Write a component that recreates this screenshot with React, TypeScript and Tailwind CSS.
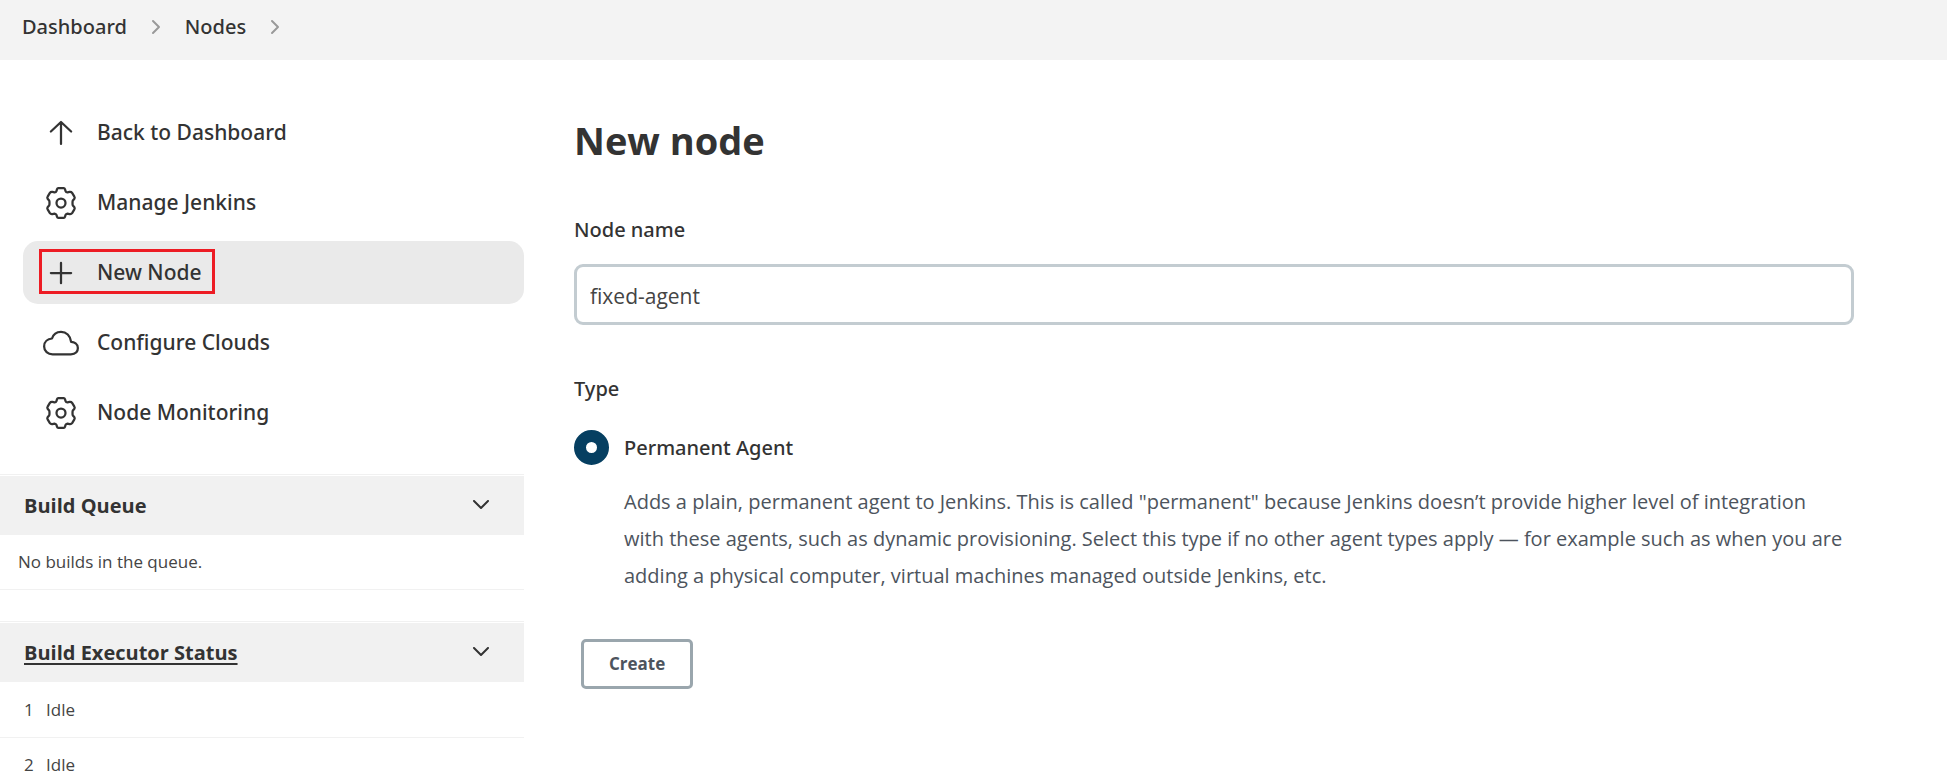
import { useState, type ReactNode } from "react";

type IconProps = { className?: string };

function Icon({ className, children }: IconProps & { children: ReactNode }) {
  return (
    <svg
      viewBox="0 0 512 512"
      className={className}
      fill="none"
      stroke="currentColor"
      strokeWidth={32}
      strokeLinecap="round"
      strokeLinejoin="round"
      aria-hidden="true"
    >
      {children}
    </svg>
  );
}

function ArrowUpIcon({ className }: IconProps) {
  return (
    <Icon className={className}>
      <path d="M112 234l144-134 144 134M256 104v308" />
    </Icon>
  );
}

// Six broad lobes with shallow notches between them, around a small hub.
function GearIcon({ className }: IconProps) {
  return (
    <Icon className={className}>
      <circle cx="256" cy="256" r="64" />
      <path d="M217 46H295Q308 46 312 58L321 86Q327 104 348 106L378 99Q402 95 414 112L446 166Q456 182 446 196L432 212Q420 224 420 238V274Q420 288 432 300L446 316Q456 330 446 346L414 400Q402 417 378 413L348 406Q327 408 321 426L312 454Q308 466 295 466H217Q204 466 200 454L191 426Q185 408 164 406L134 413Q110 417 98 400L66 346Q56 330 66 316L80 300Q92 288 92 274V238Q92 224 80 212L66 196Q56 182 66 166L98 112Q110 95 134 99L164 106Q185 104 191 86L200 58Q204 46 217 46Z" />
    </Icon>
  );
}

function PlusIcon({ className }: IconProps) {
  return (
    <Icon className={className}>
      <path d="M256 112v288M400 256H112" />
    </Icon>
  );
}

function CloudIcon({ className }: IconProps) {
  return (
    <Icon className={className}>
      <path d="M400 240c-8.89-89.54-71-144-144-144-69 0-113.44 48.2-128 96-60 6-112 43.59-112 112 0 66 54 112 120 112h260c55 0 100-27.44 100-88 0-59.82-53-85.76-96-88z" />
    </Icon>
  );
}

function ChevronRight() {
  return (
    <svg viewBox="0 0 10 16" className="h-4 w-[10px] text-[#999]" fill="none" stroke="currentColor" strokeWidth={2} strokeLinecap="round" strokeLinejoin="round" aria-hidden="true">
      <path d="M2 2l6 6L2 14" />
    </svg>
  );
}

function ChevronDown() {
  return (
    <svg viewBox="0 0 18 12" className="h-3 w-[18px]" fill="none" stroke="currentColor" strokeWidth={2} strokeLinecap="round" strokeLinejoin="round" aria-hidden="true">
      <path d="M2 1L9 8L16 1" />
    </svg>
  );
}

const tasks = [
  { label: "Back to Dashboard", icon: ArrowUpIcon },
  { label: "Manage Jenkins", icon: GearIcon },
  { label: "New Node", icon: PlusIcon, active: true },
  { label: "Configure Clouds", icon: CloudIcon },
  { label: "Node Monitoring", icon: GearIcon },
];

function Breadcrumbs() {
  return (
    <nav aria-label="Breadcrumbs" className="h-[60px] bg-[#f3f3f3] px-[22px] pt-[11px]">
      <ol className="flex items-center gap-6 font-['Noto_Sans',sans-serif] text-[20px] leading-8 font-medium">
        <li><a href="#dashboard">Dashboard</a></li>
        <li><ChevronRight /></li>
        <li><a href="#nodes">Nodes</a></li>
        <li><ChevronRight /></li>
      </ol>
    </nav>
  );
}

function TaskList() {
  return (
    <nav aria-label="Tasks" className="flex flex-col gap-[7px] pl-[23px]">
      {tasks.map(({ label, icon: TaskIcon, active }) => (
        <a
          key={label}
          href="#task"
          className={`relative flex h-[63px] items-center gap-[18px] rounded-[15px] pl-5 font-['Noto_Sans',sans-serif] text-[21px] font-medium ${active ? "bg-[#eaeaea]" : ""}`}
        >
          <TaskIcon className="size-9 shrink-0" />
          <span>{label}</span>
          {active && <span className="absolute top-2 left-4 h-[45px] w-[176px] border-3 border-[#ed1c24]" />}
        </a>
      ))}
    </nav>
  );
}

function PaneHeader({ label, children }: { label: string; children: ReactNode }) {
  return (
    <div className="border-t border-[#f1f1f1] pt-px">
      <div className="flex h-[59px] items-center justify-between bg-[#f1f1f1] pr-[34px] pl-6">
        <h2 className="text-[20px] font-bold">{children}</h2>
        <button type="button" aria-label={label}><ChevronDown /></button>
      </div>
    </div>
  );
}

export default function App() {
  const [name, setName] = useState("fixed-agent");

  return (
    <div className="min-h-screen bg-white font-['Open_Sans',sans-serif] text-[#333]">
      <Breadcrumbs />
      <div className="flex">
        <aside className="w-[524px] shrink-0 pt-[41px]">
          <TaskList />
          <section className="mt-[30px]">
            <PaneHeader label="Toggle build queue">Build Queue</PaneHeader>
            <p className="h-[55px] border-b border-[#f1f1f1] pl-[18px] text-[17px] leading-[54px] text-[#444]">No builds in the queue.</p>
          </section>
          <section className="mt-[31px]">
            <PaneHeader label="Toggle executor status">
              <a href="#executors" className="underline decoration-2 underline-offset-3">Build Executor Status</a>
            </PaneHeader>
            <table className="w-full text-left text-[17px] text-[#444]">
              <tbody>
                {[1, 2].map((n) => (
                  <tr key={n} className="h-[55px] border-b border-[#f1f1f1] last:border-0">
                    <td className="w-[46px] pl-6">{n}</td>
                    <td>Idle</td>
                  </tr>
                ))}
              </tbody>
            </table>
          </section>
        </aside>
        <main className="min-w-0 flex-1 pt-[52px] pr-[93px] pl-[50px]">
          <h1 className="text-[38px] leading-[56px] font-bold">New node</h1>
          <form onSubmit={(e) => e.preventDefault()}>
            <label htmlFor="node-name" className="mt-[46px] block font-['Noto_Sans',sans-serif] text-[20px] leading-8 font-medium">Node name</label>
            <input
              id="node-name"
              type="text"
              value={name}
              onChange={(e) => setName(e.target.value)}
              className="mt-[18px] block h-[61px] w-full rounded-[9px] border-3 border-[#c3ccd1] bg-white px-[13px] pt-0.5 text-[21px] text-[#444] outline-none"
            />
            <fieldset className="mt-12">
              <legend className="font-['Noto_Sans',sans-serif] text-[20px] leading-8 font-medium">Type</legend>
              <div className="mt-[25px] flex items-center gap-[15px]">
                <input
                  id="permanent"
                  type="radio"
                  name="type"
                  defaultChecked
                  aria-describedby="permanent-help"
                  className="size-[35px] shrink-0 appearance-none rounded-full border-12 border-[#063f61] bg-white"
                />
                <label htmlFor="permanent" className="font-['Noto_Sans',sans-serif] text-[20px] leading-8 font-medium">Permanent Agent</label>
              </div>
              <p id="permanent-help" className="mt-[18px] pr-2 pl-[50px] text-[20px] leading-[37px] text-[#4d545d]">
                Adds a plain, permanent agent to Jenkins. This is called "permanent" because Jenkins doesn’t provide higher level of integration with these agents, such as dynamic provisioning. Select this type if no other agent types apply — for example such as when you are adding a physical computer, virtual machines managed outside Jenkins, etc.
              </p>
            </fieldset>
            <button type="submit" className="mt-[45px] ml-[7px] h-[50px] rounded-[5px] border-3 border-[#9aa6ad] px-[25px] text-[17px] font-bold text-[#4d545d]">
              Create
            </button>
          </form>
        </main>
      </div>
    </div>
  );
}
